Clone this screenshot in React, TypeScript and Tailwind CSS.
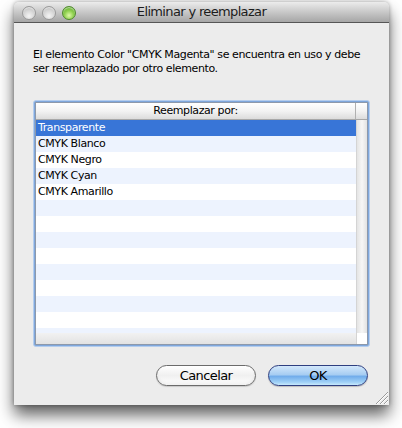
import React from "react";

const rows = ["Transparente", "CMYK Blanco", "CMYK Negro", "CMYK Cyan", "CMYK Amarillo"];

function Light({ green }: { green?: boolean }) {
  return (
    <div
      className={
        green
          ? "w-[14px] h-[14px] rounded-full border border-[#4f8a2c] bg-[radial-gradient(circle_at_50%_70%,#dff9a8_0%,#8fd04f_45%,#4e9a22_100%)] shadow-[inset_0_1px_1px_rgba(255,255,255,0.6)]"
          : "w-[14px] h-[14px] rounded-full border border-[#9a9a9a] bg-[radial-gradient(circle_at_50%_75%,#f4f4f4_0%,#d6d6d6_50%,#b4b4b4_100%)] shadow-[inset_0_1px_1px_rgba(255,255,255,0.6)]"
      }
    />
  );
}

export default function App() {
  const allRows = Array.from({ length: 14 }, (_, i) => i);
  return (
    <div
      className="w-[402px] h-[428px] bg-white pt-[2px] pl-[14px] overflow-hidden"
      style={{ fontFamily: '"DejaVu Sans", "Lucida Grande", sans-serif' }}
    >
      <div className="w-[375px] h-[403px] rounded-t-[5px] bg-[#ececec] flex flex-col shadow-[0_10px_16px_rgba(0,0,0,0.62),0_0_4px_rgba(0,0,0,0.35)]">
        {/* Title bar */}
        <div className="h-[21px] shrink-0 rounded-t-[5px] bg-gradient-to-b from-[#ececec] to-[#a6a6a6] border-b border-[#565656] grid grid-cols-[1fr_auto_1fr] items-center">
          <div className="flex items-center gap-[6px] pl-[8px] pt-[1px]">
            <Light />
            <Light />
            <Light green />
          </div>
          <div className="text-[13px] leading-[16px] text-[#1c1c1c] tracking-[-0.65px]">Eliminar y reemplazar</div>
          <div />
        </div>

        {/* Body */}
        <div className="flex-1 flex flex-col px-[19px] pt-[25px] relative">
          <p className="text-[11px] leading-[14px] text-black tracking-[-0.4px]">
            El elemento Color "CMYK Magenta" se encuentra en uso y debe ser reemplazado por otro elemento.
          </p>

          {/* List */}
          <div className="mt-[24px] h-[247px] rounded-[3px] border border-[#b4cdee] bg-[#7fa7dc] p-[1px]">
            <div className="h-full border border-[#8d99ab] bg-white flex flex-col">
              {/* Header */}
              <div className="h-[17px] shrink-0 flex border-b border-[#a8a8a8] bg-gradient-to-b from-[#ffffff] via-[#f3f3f3] to-[#dcdcdc]">
                <div className="w-[320px] flex items-center justify-center text-[11px] leading-[16px] text-black tracking-[-0.4px] border-r border-[#b0b0b0]">
                  Reemplazar por:
                </div>
                <div className="flex-1" />
              </div>
              {/* Rows area */}
              <div className="flex-1 flex min-h-0">
                <div className="w-[320px] flex flex-col overflow-hidden">
                  <div className="h-[213px] overflow-hidden flex flex-col">
                    {allRows.map((i) => (
                      <div
                        key={i}
                        className={
                          i === 0
                            ? "h-[16px] shrink-0 bg-[#3875d7] text-white text-[11px] leading-[16px] pl-[2px] tracking-[-0.4px]"
                            : i % 2 === 1
                            ? "h-[16px] shrink-0 bg-[#edf3fe] text-black text-[11px] leading-[16px] pl-[2px] tracking-[-0.4px]"
                            : "h-[16px] shrink-0 bg-white text-black text-[11px] leading-[16px] pl-[2px] tracking-[-0.4px]"
                        }
                      >
                        {rows[i] ?? ""}
                      </div>
                    ))}
                  </div>
                  <div className="flex-1 bg-gradient-to-b from-[#f2f2f2] to-[#e2e2e2]" />
                </div>
                <div className="flex-1 flex flex-col border-l border-[#d4d4d4]">
                  <div className="h-[213px] bg-gradient-to-r from-[#e4e4e4] via-[#f6f6f6] to-[#e2e2e2]" />
                  <div className="flex-1 bg-white" />
                </div>
              </div>
            </div>
          </div>

          {/* Buttons */}
          <div className="mt-[18px] flex justify-end gap-[12px] pr-[2px]">
            <button className="w-[100px] h-[21px] rounded-full border border-[#6b6b6b] bg-gradient-to-b from-[#ffffff] via-[#f0f0f0] to-[#ffffff] shadow-[inset_0_-2px_3px_rgba(0,0,0,0.06),0_1px_1px_rgba(0,0,0,0.15)] text-[13px] leading-[19px] text-black tracking-[-0.6px]">
              Cancelar
            </button>
            <button className="w-[100px] h-[21px] rounded-full border border-[#2f3f80] bg-[linear-gradient(to_bottom,#d3e8fb_0%,#a7cdf2_45%,#72adeb_55%,#9fd0f6_85%,#c7e9fd_100%)] shadow-[0_1px_1px_rgba(0,0,0,0.2)] text-[13px] leading-[19px] text-black tracking-[-0.6px]">
              OK
            </button>
          </div>

          {/* Resize grip */}
          <svg className="absolute right-[1px] bottom-[1px]" width="14" height="12" viewBox="0 0 14 12">
            <line x1="2" y1="12" x2="14" y2="0" stroke="#9a9a9a" strokeWidth="1" />
            <line x1="6" y1="12" x2="14" y2="4" stroke="#9a9a9a" strokeWidth="1" />
            <line x1="10" y1="12" x2="14" y2="8" stroke="#9a9a9a" strokeWidth="1" />
            <line x1="3" y1="12" x2="14" y2="1" stroke="#ffffff" strokeWidth="1" />
            <line x1="7" y1="12" x2="14" y2="5" stroke="#ffffff" strokeWidth="1" />
            <line x1="11" y1="12" x2="14" y2="9" stroke="#ffffff" strokeWidth="1" />
          </svg>
        </div>
      </div>
    </div>
  );
}
